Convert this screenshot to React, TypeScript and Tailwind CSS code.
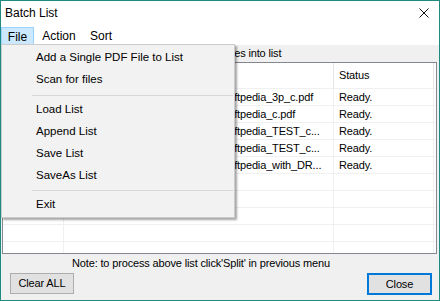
const ROWS = [
  { file: 'Softpedia_3p_c.pdf', status: 'Ready.', pad: 'pl-[157px]' },
  { file: 'Softpedia_c.pdf', status: 'Ready.', pad: 'pl-[157px]' },
  { file: 'Softpedia_TEST_c...', status: 'Ready.', pad: 'pl-[157px]' },
  { file: 'Softpedia_TEST_c...', status: 'Ready.', pad: 'pl-[157px]' },
  { file: 'Softpedia_with_DR...', status: 'Ready.', pad: 'pl-[157px]' },
  { file: '', status: '', pad: '' },
  { file: '', status: '', pad: '' },
  { file: '', status: '', pad: '' },
  { file: '', status: '', pad: '' },
  { file: '', status: '', pad: '' },
];

function MenuItem({ label }: { label: string }) {
  return <div className="h-[22px] flex items-center pl-[34px] text-[11.5px] text-black">{label}</div>;
}

export default function App() {
  return (
    <div className="w-[440px] h-[301px] border border-[#1f8a80] bg-[#f0f0f0] flex flex-col relative overflow-hidden font-['Liberation_Sans',Arial,sans-serif] text-black">
      {/* title bar */}
      <div className="h-[22px] bg-white flex items-center justify-between pl-[4px] pr-[10px] shrink-0">
        <span className="text-[12px] mt-[1px]">Batch List</span>
        <svg width="10" height="10" viewBox="0 0 10 10" className="mt-[2px]">
          <path d="M0.5 0.5 L9.5 9.5 M9.5 0.5 L0.5 9.5" stroke="#111" strokeWidth="1" fill="none" />
        </svg>
      </div>

      {/* menu bar */}
      <div className="h-[22px] bg-white flex items-end text-[12px] shrink-0">
        <div className="w-[33px] h-[19px] flex items-center justify-center bg-[#cce8ff] border border-[#99d1ff] mb-[-1px]">File</div>
        <div className="w-[48px] h-[19px] flex items-center justify-center ml-[1px]">Action</div>
        <div className="w-[36px] h-[19px] flex items-center justify-center">Sort</div>
      </div>

      {/* hint */}
      <div className="h-[17px] flex items-center pl-[130px] text-[11px] tracking-[-0.15px] shrink-0">
        Drag and drop PDF files into list
      </div>

      {/* list view */}
      <div className="h-[192px] ml-[1px] mr-[2px] border border-[#828790] bg-white overflow-hidden shrink-0 text-[11px] tracking-[-0.15px]">
        <div className="h-[25px] flex">
          <div className="w-[61px] border-r border-[#e5e5e5]" />
          <div className="w-[270px] border-r border-[#e5e5e5]" />
          <div className="w-[100px] border-r border-[#e5e5e5] flex items-center pl-[5px]">Status</div>
        </div>
        <div className="border-t border-[#f0f0f0]">
          {ROWS.map((r, i) => (
            <div key={i} className="h-[17px] flex border-b border-[#f0f0f0]">
              <div className="w-[61px] border-r border-[#f0f0f0]" />
              <div className={`w-[270px] border-r border-[#f0f0f0] flex items-center whitespace-nowrap overflow-hidden ${r.pad}`}>{r.file}</div>
              <div className="w-[100px] border-r border-[#f0f0f0] flex items-center pl-[5px]">{r.status}</div>
            </div>
          ))}
        </div>
      </div>

      {/* note */}
      <div className="h-[18px] flex items-center pl-[71px] text-[11px] tracking-[-0.15px] shrink-0">
        Note: to process above list click'Split' in previous menu
      </div>

      {/* buttons */}
      <div className="mt-[1px] h-[21px] flex justify-between pl-[9px] pr-[7px] text-[11px] tracking-[-0.15px] shrink-0">
        <button className="w-[64px] h-[21px] bg-[#e1e1e1] border border-[#adadad] flex items-center justify-center">Clear ALL</button>
        <button className="w-[65px] h-[22px] bg-[#e1e1e1] border-2 border-[#0078d7] flex items-center justify-center">Close</button>
      </div>

      {/* File dropdown */}
      <div className="absolute left-0 top-[43px] w-[234px] bg-[#f2f2f2] border border-[#cccccc] pt-[2px] pb-[1px] shadow-[2px_2px_2px_rgba(0,0,0,0.35)]">
        <MenuItem label="Add a Single PDF File to List" />
        <MenuItem label="Scan for files" />
        <div className="h-[1px] bg-[#d7d7d7] ml-[30px] mr-[1px] mt-[4px] mb-[3px]" />
        <MenuItem label="Load List" />
        <MenuItem label="Append List" />
        <MenuItem label="Save List" />
        <MenuItem label="SaveAs List" />
        <div className="h-[1px] bg-[#d7d7d7] ml-[30px] mr-[1px] mt-[3px] mb-[3px]" />
        <MenuItem label="Exit" />
      </div>
    </div>
  );
}
